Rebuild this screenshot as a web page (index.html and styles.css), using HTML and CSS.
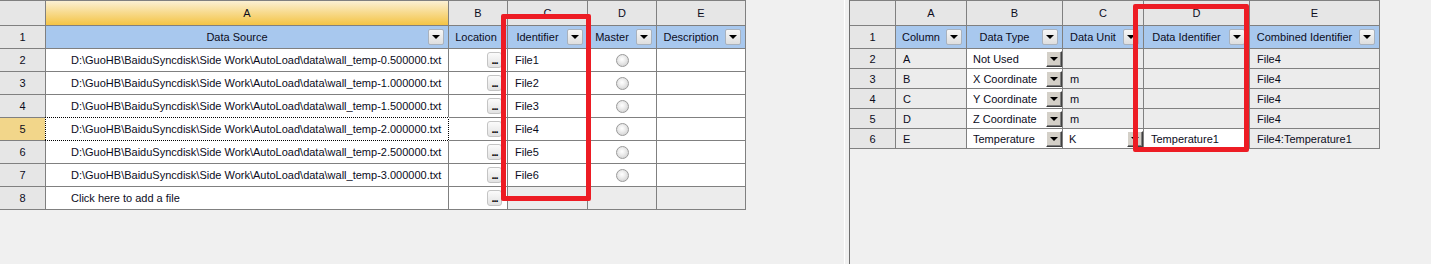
FILE: index.html
```html
<!DOCTYPE html>
<html>
<head>
<meta charset="utf-8">
<link rel="stylesheet" href="styles.css">
</head>
<body>
<div class="app">
  <div class="pane pane-left">
    <div class="grid grid-left">
      <div class="c corner"></div>
      <div class="c colh sel">A</div>
      <div class="c colh">B</div>
      <div class="c colh">C</div>
      <div class="c colh">D</div>
      <div class="c colh">E</div>

      <div class="c rowh">1</div>
      <div class="c fh"><span class="ft">Data Source</span><span class="dd"></span></div>
      <div class="c fh"><span class="ft">Location</span></div>
      <div class="c fh"><span class="ft">Identifier</span><span class="dd"></span></div>
      <div class="c fh"><span class="ft">Master</span><span class="dd"></span></div>
      <div class="c fh"><span class="ft">Description</span><span class="dd"></span></div>

      <div class="c rowh">2</div>
      <div class="c path">D:\GuoHB\BaiduSyncdisk\Side Work\AutoLoad\data\wall_temp-0.500000.txt</div>
      <div class="c loc"><span class="ell">...</span></div>
      <div class="c txt">File1</div>
      <div class="c mid"><span class="radio"></span></div>
      <div class="c"></div>

      <div class="c rowh">3</div>
      <div class="c path">D:\GuoHB\BaiduSyncdisk\Side Work\AutoLoad\data\wall_temp-1.000000.txt</div>
      <div class="c loc"><span class="ell">...</span></div>
      <div class="c txt">File2</div>
      <div class="c mid"><span class="radio"></span></div>
      <div class="c"></div>

      <div class="c rowh">4</div>
      <div class="c path">D:\GuoHB\BaiduSyncdisk\Side Work\AutoLoad\data\wall_temp-1.500000.txt</div>
      <div class="c loc"><span class="ell">...</span></div>
      <div class="c txt">File3</div>
      <div class="c mid"><span class="radio"></span></div>
      <div class="c"></div>

      <div class="c rowh rsel">5</div>
      <div class="c path focus">D:\GuoHB\BaiduSyncdisk\Side Work\AutoLoad\data\wall_temp-2.000000.txt</div>
      <div class="c loc"><span class="ell">...</span></div>
      <div class="c txt">File4</div>
      <div class="c mid"><span class="radio"></span></div>
      <div class="c"></div>

      <div class="c rowh">6</div>
      <div class="c path">D:\GuoHB\BaiduSyncdisk\Side Work\AutoLoad\data\wall_temp-2.500000.txt</div>
      <div class="c loc"><span class="ell">...</span></div>
      <div class="c txt">File5</div>
      <div class="c mid"><span class="radio"></span></div>
      <div class="c"></div>

      <div class="c rowh">7</div>
      <div class="c path">D:\GuoHB\BaiduSyncdisk\Side Work\AutoLoad\data\wall_temp-3.000000.txt</div>
      <div class="c loc"><span class="ell">...</span></div>
      <div class="c txt">File6</div>
      <div class="c mid"><span class="radio"></span></div>
      <div class="c"></div>

      <div class="c rowh">8</div>
      <div class="c path">Click here to add a file</div>
      <div class="c loc"><span class="ell">...</span></div>
      <div class="c ro"></div>
      <div class="c ro"></div>
      <div class="c ro"></div>
    </div>
    <div class="mark mark-left"></div>
  </div>

  <div class="splitter"></div>

  <div class="pane pane-right">
    <div class="grid grid-right">
      <div class="c corner"></div>
      <div class="c colh">A</div>
      <div class="c colh">B</div>
      <div class="c colh">C</div>
      <div class="c colh">D</div>
      <div class="c colh">E</div>

      <div class="c rowh">1</div>
      <div class="c fh"><span class="ft">Column</span><span class="dd"></span></div>
      <div class="c fh"><span class="ft">Data Type</span><span class="dd"></span></div>
      <div class="c fh"><span class="ft">Data Unit</span><span class="dd"></span></div>
      <div class="c fh"><span class="ft">Data Identifier</span><span class="dd"></span></div>
      <div class="c fh"><span class="ft">Combined Identifier</span><span class="dd"></span></div>

      <div class="c rowh">2</div>
      <div class="c ro txt">A</div>
      <div class="c combo"><span class="ct">Not Used</span><span class="cbtn"></span></div>
      <div class="c ro txt"></div>
      <div class="c ro txt"></div>
      <div class="c ro txt">File4</div>

      <div class="c rowh">3</div>
      <div class="c ro txt">B</div>
      <div class="c combo"><span class="ct">X Coordinate</span><span class="cbtn"></span></div>
      <div class="c ro txt">m</div>
      <div class="c ro txt"></div>
      <div class="c ro txt">File4</div>

      <div class="c rowh">4</div>
      <div class="c ro txt">C</div>
      <div class="c combo"><span class="ct">Y Coordinate</span><span class="cbtn"></span></div>
      <div class="c ro txt">m</div>
      <div class="c ro txt"></div>
      <div class="c ro txt">File4</div>

      <div class="c rowh">5</div>
      <div class="c ro txt">D</div>
      <div class="c combo"><span class="ct">Z Coordinate</span><span class="cbtn"></span></div>
      <div class="c ro txt">m</div>
      <div class="c ro txt"></div>
      <div class="c ro txt">File4</div>

      <div class="c rowh">6</div>
      <div class="c ro txt">E</div>
      <div class="c combo"><span class="ct">Temperature</span><span class="cbtn"></span></div>
      <div class="c combo"><span class="ct">K</span><span class="cbtn"></span></div>
      <div class="c txt white">Temperature1</div>
      <div class="c ro txt">File4:Temperature1</div>
    </div>
    <div class="mark mark-right"></div>
  </div>
</div>
</body>
</html>
```

FILE: styles.css
```css
html, body {
  margin: 0;
  padding: 0;
}
body {
  background: #f0f0f0;
  font-family: "Liberation Sans", Arial, sans-serif;
  font-size: 11px;
  color: #0c0c1c;
}
.app {
  display: flex;
  width: 1431px;
  height: 264px;
  overflow: hidden;
}
.pane {
  position: relative;
  background: #f0f0f0;
}
.pane-left {
  width: 844px;
  flex: none;
}
.splitter {
  width: 4px;
  flex: none;
  border-left: 1px solid #ffffff;
  background: #f0f0f0;
}
.pane-right {
  flex: 1;
  border-left: 1px solid #6e6e6e;
}
.grid {
  display: grid;
  border-top: 1px solid #808080;
}
.grid-left {
  width: 746px;
  grid-template-columns: 46px 403px 59px 80px 69px 89px;
  grid-template-rows: 25px 23px repeat(7, 23px);
}
.grid-right {
  width: 530px;
  grid-template-columns: 46px 71px 96px 81px 106px 130px;
  grid-template-rows: 25px 23px repeat(5, 20px);
}
.c {
  box-sizing: border-box;
  border-right: 1px solid #808080;
  border-bottom: 1px solid #808080;
  background: #ffffff;
  display: flex;
  align-items: center;
  white-space: nowrap;
  overflow: hidden;
  min-width: 0;
}
.corner, .colh, .rowh {
  background: #e6e6e6;
  justify-content: center;
}
.colh.sel {
  background: linear-gradient(#fbf0d4 0%, #f8dc92 45%, #f4c445 100%);
}
.rowh.rsel {
  background: #f2d68a;
}
.fh {
  background: #a8c8ee;
  padding-right: 4px;
}
.ft {
  flex: 1;
  text-align: center;
}
.dd {
  box-sizing: border-box;
  width: 16px;
  height: 16px;
  flex: none;
  border: 1px solid #a9b2bd;
  border-radius: 2px;
  background: linear-gradient(#f7f7f7, #dedede);
  position: relative;
}
.dd::after {
  content: "";
  position: absolute;
  left: 3px;
  top: 5px;
  border-left: 4px solid transparent;
  border-right: 4px solid transparent;
  border-top: 4px solid #000;
}
.path {
  padding-left: 25px;
}
.focus {
  position: relative;
  overflow: visible;
}
.focus::after {
  content: "";
  position: absolute;
  top: -1px;
  left: -1px;
  right: -1px;
  bottom: -1px;
  z-index: 1;
  background:
    repeating-linear-gradient(90deg, #000 0 1px, #fff 1px 2px) top left / 100% 1px no-repeat,
    repeating-linear-gradient(90deg, #000 0 1px, #fff 1px 2px) bottom left / 100% 1px no-repeat,
    repeating-linear-gradient(180deg, #000 0 1px, #fff 1px 2px) top left / 1px 100% no-repeat,
    repeating-linear-gradient(180deg, #000 0 1px, #fff 1px 2px) top right / 1px 100% no-repeat;
}
.loc {
  justify-content: flex-end;
  padding-right: 5px;
}
.ell {
  box-sizing: border-box;
  width: 15px;
  height: 16px;
  border: 1px solid #c4c4c4;
  border-radius: 3px;
  background: linear-gradient(#fbfbfb, #e2e2e2);
  font-weight: bold;
  font-size: 11px;
  line-height: 11px;
  text-align: center;
  letter-spacing: -1px;
  color: #000;
  display: flex;
  align-items: flex-end;
  justify-content: center;
  padding-bottom: 1px;
  overflow: hidden;
}
.txt {
  padding-left: 7px;
}
.mid {
  justify-content: center;
}
.radio {
  box-sizing: border-box;
  width: 13px;
  height: 13px;
  border-radius: 50%;
  border: 1px solid #9a9a9a;
  background: radial-gradient(circle at 45% 40%, #ffffff 0%, #eeeeee 35%, #c8c8c8 100%);
}
.ro {
  background: #ececec;
}
.white {
  background: #ffffff;
}
.combo {
  background: #ffffff;
  padding-left: 6px;
}
.ct {
  flex: 1;
  overflow: hidden;
}
.cbtn {
  box-sizing: border-box;
  width: 16px;
  height: 16px;
  flex: none;
  background: #d4d0c8;
  border: 1px solid;
  border-color: #ffffff #404040 #404040 #ffffff;
  box-shadow: inset -1px -1px 0 #808080;
  position: relative;
}
.cbtn::after {
  content: "";
  position: absolute;
  left: 3px;
  top: 5px;
  border-left: 4px solid transparent;
  border-right: 4px solid transparent;
  border-top: 4px solid #000;
}
.mark {
  position: absolute;
  box-sizing: border-box;
  border: 5px solid #ed1c24;
  border-radius: 2px;
  pointer-events: none;
}
.mark-left {
  left: 501px;
  top: 14px;
  width: 90px;
  height: 187px;
}
.mark-right {
  left: 283px;
  top: 4px;
  width: 116px;
  height: 148px;
}
```
